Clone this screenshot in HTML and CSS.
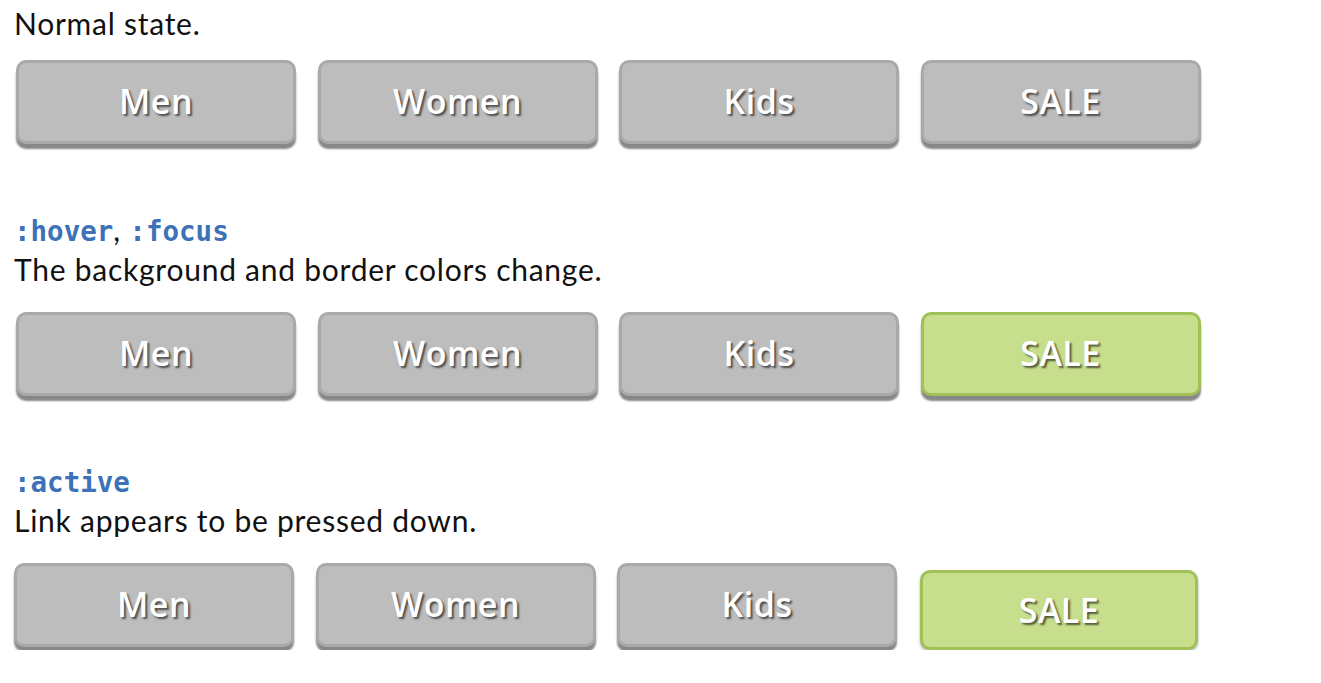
FILE: index.html
```html
<!DOCTYPE html>
<html lang="en">
<head>
<meta charset="utf-8">
<title>Link states</title>
<link rel="stylesheet" href="styles.css">
</head>
<body>
<main class="page">
  <section class="state state-normal">
    <p class="desc">Normal state.</p>
    <nav class="row">
      <a class="btn" href="#">Men</a>
      <a class="btn" href="#">Women</a>
      <a class="btn" href="#">Kids</a>
      <a class="btn" href="#">SALE</a>
    </nav>
  </section>
  <section class="state state-hover">
    <p class="label"><code>:hover</code>, <code>:focus</code></p>
    <p class="desc">The background and border colors change.</p>
    <nav class="row">
      <a class="btn" href="#">Men</a>
      <a class="btn" href="#">Women</a>
      <a class="btn" href="#">Kids</a>
      <a class="btn btn-hover" href="#">SALE</a>
    </nav>
  </section>
  <section class="state state-active">
    <p class="label"><code>:active</code></p>
    <p class="desc">Link appears to be pressed down.</p>
    <nav class="row row-active">
      <a class="btn" href="#">Men</a>
      <a class="btn" href="#">Women</a>
      <a class="btn" href="#">Kids</a>
      <a class="btn btn-active" href="#">SALE</a>
    </nav>
  </section>
</main>
</body>
</html>
```

FILE: styles.css
```css
html, body {
  margin: 0;
  padding: 0;
  background: #ffffff;
}

body {
  font-family: Lato, "Noto Sans", sans-serif;
  color: #111111;
}

.page {
  padding: 3px 0 0 14px;
}

.state {
  display: flex;
  flex-direction: column;
}

.desc, .label {
  margin: 0;
  font-size: 30px;
  line-height: 40px;
  letter-spacing: 0.75px;
}

.label code {
  font-family: "DejaVu Sans Mono", "Liberation Mono", monospace;
  font-weight: bold;
  font-size: 27.5px;
  line-height: 1;
  letter-spacing: 0;
  color: #3d72b8;
}

.row {
  display: flex;
  gap: 21.5px;
  padding-left: 2px;
  align-items: flex-start;
}

.state-normal .row { margin-top: 17px; }
.state-hover { margin-top: 65px; }
.state-hover .row { margin-top: 23px; }
.state-active { margin-top: 64px; }
.state-active .row { margin-top: 23px; padding-left: 0; }

.btn {
  box-sizing: border-box;
  width: 280px;
  height: 84px;
  padding-bottom: 3px;
  display: flex;
  align-items: center;
  justify-content: center;
  background: #bdbdbd;
  border: 3px solid #a9a9a9;
  border-radius: 10px;
  box-shadow: 0 5px 2px 0 #878787;
  color: #ffffff;
  text-decoration: none;
  font-family: "Open Sans", sans-serif;
  font-weight: 600;
  font-size: 34px;
  letter-spacing: 0.5px;
  text-shadow: 2px 2px 2px rgba(0, 0, 0, 0.6);
}

.btn-hover {
  background: #c7de8c;
  border-color: #9fc158;
}

.btn-active {
  width: 278px;
  margin-left: 1.5px;
  background: #c7de8c;
  border-color: #9fc158;
  margin-top: 7px;
  height: 80px;
  padding-bottom: 0;
  box-shadow: 0 2px 3px rgba(0, 0, 0, 0.3);
}
```
